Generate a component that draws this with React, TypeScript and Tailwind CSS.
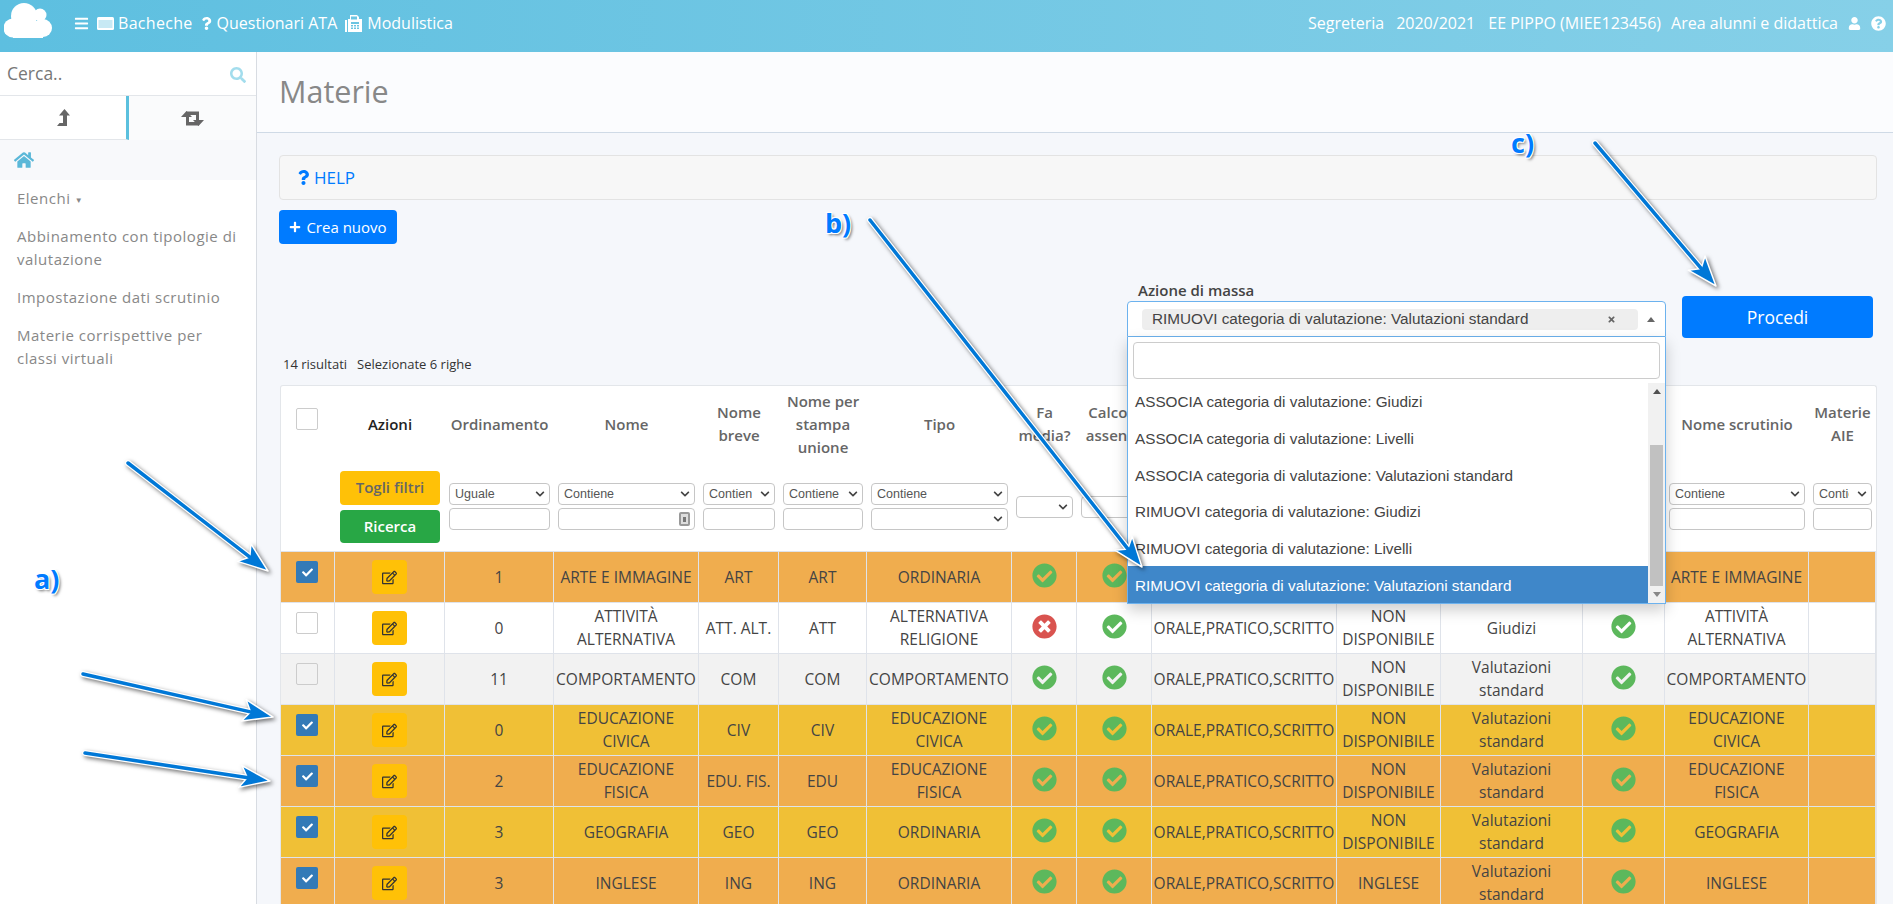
import {
  FaBars,
  FaCheck,
  FaCheckCircle,
  FaChevronDown,
  FaHome,
  FaPlus,
  FaQuestion,
  FaQuestionCircle,
  FaRegEdit,
  FaSearch,
  FaTimes,
  FaTimesCircle,
  FaUser,
} from "react-icons/fa";

type Row = {
  tone: string;
  checked: boolean;
  order: string;
  name: string;
  short: string;
  merge: string;
  type: string;
  media: boolean;
  voto: string;
  categoria: string;
  scrutinio: string;
};

const ORANGE = "bg-[#f0ad4e]";
const YELLOW = "bg-[#f0c036]";

const rows: Row[] = [
  { tone: ORANGE, checked: true, order: "1", name: "ARTE E IMMAGINE", short: "ART", merge: "ART", type: "ORDINARIA", media: true, voto: "NON DISPONIBILE", categoria: "Valutazioni standard", scrutinio: "ARTE E IMMAGINE" },
  { tone: "bg-white", checked: false, order: "0", name: "ATTIVITÀ ALTERNATIVA", short: "ATT. ALT.", merge: "ATT", type: "ALTERNATIVA RELIGIONE", media: false, voto: "NON DISPONIBILE", categoria: "Giudizi", scrutinio: "ATTIVITÀ ALTERNATIVA" },
  { tone: "bg-[#f2f2f2]", checked: false, order: "11", name: "COMPORTAMENTO", short: "COM", merge: "COM", type: "COMPORTAMENTO", media: true, voto: "NON DISPONIBILE", categoria: "Valutazioni standard", scrutinio: "COMPORTAMENTO" },
  { tone: YELLOW, checked: true, order: "0", name: "EDUCAZIONE CIVICA", short: "CIV", merge: "CIV", type: "EDUCAZIONE CIVICA", media: true, voto: "NON DISPONIBILE", categoria: "Valutazioni standard", scrutinio: "EDUCAZIONE CIVICA" },
  { tone: ORANGE, checked: true, order: "2", name: "EDUCAZIONE FISICA", short: "EDU. FIS.", merge: "EDU", type: "EDUCAZIONE FISICA", media: true, voto: "NON DISPONIBILE", categoria: "Valutazioni standard", scrutinio: "EDUCAZIONE FISICA" },
  { tone: YELLOW, checked: true, order: "3", name: "GEOGRAFIA", short: "GEO", merge: "GEO", type: "ORDINARIA", media: true, voto: "NON DISPONIBILE", categoria: "Valutazioni standard", scrutinio: "GEOGRAFIA" },
  { tone: ORANGE, checked: true, order: "3", name: "INGLESE", short: "ING", merge: "ING", type: "ORDINARIA", media: true, voto: "INGLESE", categoria: "Valutazioni standard", scrutinio: "INGLESE" },
];

const options = [
  "ASSOCIA categoria di valutazione: Giudizi",
  "ASSOCIA categoria di valutazione: Livelli",
  "ASSOCIA categoria di valutazione: Valutazioni standard",
  "RIMUOVI categoria di valutazione: Giudizi",
  "RIMUOVI categoria di valutazione: Livelli",
  "RIMUOVI categoria di valutazione: Valutazioni standard",
];

const arrows = [
  { x1: 128, y1: 463, x2: 268, y2: 571 },
  { x1: 83, y1: 674, x2: 273, y2: 717 },
  { x1: 85, y1: 753, x2: 270, y2: 781 },
  { x1: 870, y1: 220, x2: 1142, y2: 567 },
  { x1: 1595, y1: 143, x2: 1716, y2: 286 },
];

function FilterSelect({ label }: { label?: string }) {
  return (
    <div className="flex h-[22px] items-center justify-between overflow-hidden rounded-[4px] border border-[#c6c6c6] bg-white pl-[5px] pr-[4px] text-left font-['Liberation_Sans',sans-serif] text-[12.5px] font-normal text-[#555]">
      <span className="min-w-0 flex-1 overflow-hidden whitespace-nowrap">{label}</span>
      <FaChevronDown className="ml-[8px] shrink-0 text-[10px] text-[#444]" />
    </div>
  );
}

function FilterInput({ icon }: { icon?: boolean }) {
  return (
    <div className="mt-[3px] flex h-[22px] items-center justify-end rounded-[4px] border border-[#c6c6c6] bg-white pr-[4px]">
      {icon && (
        <span className="flex h-[14px] w-[11px] items-center justify-center rounded-[2px] border-2 border-[#999] bg-[#ddd]">
          <span className="h-[5px] w-[3px] bg-[#777]" />
        </span>
      )}
    </div>
  );
}

function Checkbox({ checked }: { checked?: boolean }) {
  if (checked) {
    return (
      <span className="flex size-[22px] items-center justify-center rounded-[2px] bg-[#337ab7] text-white">
        <FaCheck className="text-[11px]" />
      </span>
    );
  }
  return <span className="block size-[22px] rounded-[2px] border border-[#ccc]" />;
}

function Flag({ ok }: { ok: boolean }) {
  return ok ? (
    <FaCheckCircle className="mx-auto -mt-[3px] text-[25px] text-[#5cb85c]" />
  ) : (
    <FaTimesCircle className="mx-auto -mt-[3px] text-[25px] text-[#d9534f]" />
  );
}

function Cloud() {
  return (
    <svg className="-mt-[5px]" width="48" height="35" viewBox="0 0 48 35" fill="white">
      <circle cx="20" cy="13" r="13" />
      <circle cx="36" cy="12" r="6.5" />
      <circle cx="9" cy="25" r="9.5" />
      <circle cx="39" cy="25" r="9" />
      <rect x="9" y="18" width="30" height="17" />
    </svg>
  );
}

function BoardIcon() {
  return (
    <svg width="17" height="13" viewBox="0 0 17 13">
      <rect width="17" height="13" rx="1.5" fill="white" />
      <path fill="#8fd3ea" d="M1.5 3.5h14v1h-14zM1.5 5.5h14v1h-14zM1.5 7.5h14v1h-14zM1.5 9.5h14v1h-14z" />
    </svg>
  );
}

function FormsIcon() {
  return (
    <svg width="17" height="17" viewBox="0 0 17 17">
      <path fill="white" d="M0 5h2v12H0zM3 4h2V0h7l2 2v2h3v13H3z" />
      <rect x="6" y="1.5" width="6" height="3" fill="#6cc5e2" />
      <path fill="#6cc5e2" d="M6 7h8v2H6zM6 10h2v1.5H6zM9 10h2v1.5H9zM12 10h2v1.5h-2zM6 12.5h2V14H6zM9 12.5h2V14H9zM12 12.5h2V14h-2z" />
    </svg>
  );
}

function LevelUpIcon() {
  return (
    <svg width="13" height="17" viewBox="0 0 13 17" fill="#666">
      <path d="M7.5 0L13 6.5H10V17H0L2.5 14H6V6.5H2Z" />
    </svg>
  );
}

function RetweetIcon() {
  return (
    <svg width="23" height="15" viewBox="0 0 23 15" fill="#666">
      <path d="M5.5 0L11 6H8V11H15L18 14.5H5V6H0Z" />
      <path d="M17.5 15L12 9H15V4H8L5 .5H18V9H23Z" />
    </svg>
  );
}

function Arrow({ x1, y1, x2, y2 }: { x1: number; y1: number; x2: number; y2: number }) {
  const len = Math.hypot(x2 - x1, y2 - y1);
  const ux = (x2 - x1) / len;
  const uy = (y2 - y1) / len;
  const nx = -uy;
  const ny = ux;
  const head = [
    [x2, y2],
    [x2 - ux * 30 + nx * 11, y2 - uy * 30 + ny * 11],
    [x2 - ux * 23, y2 - uy * 23],
    [x2 - ux * 30 - nx * 11, y2 - uy * 30 - ny * 11],
  ]
    .map((p) => p.join(","))
    .join(" ");
  const ex = x2 - ux * 22;
  const ey = y2 - uy * 22;
  return (
    <g>
      <line x1={x1} y1={y1} x2={ex} y2={ey} stroke="white" strokeWidth="6" strokeLinecap="round" />
      <polygon points={head} fill="#0078d7" stroke="white" strokeWidth="1.5" strokeLinejoin="round" />
      <line x1={x1} y1={y1} x2={ex} y2={ey} stroke="#0078d7" strokeWidth="3.5" strokeLinecap="round" />
    </g>
  );
}

function Callout({ text, className }: { text: string; className: string }) {
  return (
    <span
      className={`absolute z-50 text-[27px] font-bold leading-none text-[#007bff] [text-shadow:-1px_-1px_0_#fff,1px_-1px_0_#fff,-1px_1px_0_#fff,1px_1px_0_#fff,2px_2px_3px_rgba(0,0,0,0.55)] ${className}`}
    >
      {text}
    </span>
  );
}

function TopBar() {
  return (
    <header className="flex h-[52px] shrink-0 items-center bg-gradient-to-r from-[#5dbfe0] to-[#86d0e8] pb-[6px] pl-[4px] pr-[7px] text-[16px] text-white">
      <Cloud />
      <FaBars className="ml-[22px] text-[15px]" />
      <span className="ml-[8px]">
        <BoardIcon />
      </span>
      <span className="ml-[4px] tracking-[0.3px]">Bacheche</span>
      <FaQuestion className="ml-[7px] text-[13px]" />
      <span className="ml-[4px]">Questionari ATA</span>
      <span className="ml-[8px]">
        <FormsIcon />
      </span>
      <span className="ml-[5px]">Modulistica</span>
      <div className="ml-auto flex items-center">
        <span>Segreteria</span>
        <span className="ml-[12px]">2020/2021</span>
        <span className="ml-[13px]">EE PIPPO (MIEE123456)</span>
        <span className="ml-[10px]">Area alunni e didattica</span>
        <FaUser className="ml-[10px] text-[13px]" />
        <FaQuestionCircle className="ml-[10px] text-[15px]" />
      </div>
    </header>
  );
}

function Sidebar() {
  return (
    <aside className="w-[257px] shrink-0 border-r border-[#d8dce2] bg-white">
      <div className="flex h-[44px] items-center justify-between border-b border-[#e3e6ea] pl-[7px] pr-[10px] text-[17.5px] text-[#777]">
        <span>Cerca..</span>
        <FaSearch className="mt-[2px] text-[16px] text-[#a3dded]" />
      </div>
      <div className="flex h-[44px]">
        <div className="flex w-[129px] items-center justify-center border-b border-r-[3px] border-[#e3e6ea] border-r-[#5bc0de]">
          <LevelUpIcon />
        </div>
        <div className="flex flex-1 items-center justify-center bg-[#fafbfc]">
          <RetweetIcon />
        </div>
      </div>
      <div className="flex h-[40px] items-center bg-[#f8f9fb] pl-[14px] text-[20px] text-[#5bb8d8]">
        <FaHome />
      </div>
      <nav className="px-[17px] pt-[6px] text-[15px] leading-[23px] tracking-[0.5px] text-[#888]">
        <p className="py-[1px]">
          Elenchi <span className="text-[8px] align-middle">▼</span>
        </p>
        <p className="mt-[13px]">Abbinamento con tipologie di valutazione</p>
        <p className="mt-[15px]">Impostazione dati scrutinio</p>
        <p className="mt-[15px]">Materie corrispettive per classi virtuali</p>
      </nav>
    </aside>
  );
}

function BulkAction() {
  return (
    <div className="mt-[36px] flex items-end justify-end gap-4 pr-[4px]">
      <div className="relative mb-px w-[539px]">
        <p className="mb-[1px] pl-[11px] text-[15px] font-semibold leading-[20px] text-[#444]">Azione di massa</p>
        <div className="flex h-[36px] items-center rounded-t-[4px] border border-[#6cb2ee] bg-white pl-[14px] pr-[10px] font-['Liberation_Sans',sans-serif] text-[15.3px] text-[#444]">
          <div className="flex h-[21px] flex-1 items-center justify-between rounded-[4px] bg-[#eee] pl-[10px] pr-[22px]">
            <span>RIMUOVI categoria di valutazione: Valutazioni standard</span>
            <FaTimes className="text-[9px] text-[#666]" />
          </div>
          <span className="ml-[9px] h-0 w-0 border-x-[4px] border-b-[5px] border-x-transparent border-b-[#666]" />
        </div>
        <div className="absolute inset-x-0 top-full z-20 border border-t-0 border-[#6cb2ee] bg-white font-['Liberation_Sans',sans-serif] text-[15.3px] text-[#444] shadow-[0_6px_14px_rgba(0,0,0,0.2)]">
          <div className="px-[5px] pb-[4px] pt-[5px]">
            <div className="h-[37px] rounded-[4px] border border-[#ccc] bg-white" />
          </div>
          <div className="flex">
            <ul className="min-w-0 flex-1">
              {options.map((o, i) => (
                <li
                  key={o}
                  className={`flex h-[36.7px] items-center pl-[7px] pt-[3px] ${
                    i === options.length - 1 ? "bg-[#3f87c9] text-white" : ""
                  }`}
                >
                  {o}
                </li>
              ))}
            </ul>
            <div className="flex w-[17px] flex-col items-center bg-[#f1f1f1]">
              <span className="flex h-[17px] items-center">
                <span className="h-0 w-0 border-x-[4px] border-b-[5px] border-x-transparent border-b-[#505050]" />
              </span>
              <div className="mt-[45px] h-[141px] w-[13px] bg-[#c1c1c1]" />
              <span className="flex h-[17px] items-center">
                <span className="h-0 w-0 border-x-[4px] border-t-[5px] border-x-transparent border-t-[#888]" />
              </span>
            </div>
          </div>
        </div>
      </div>
      <button className="h-[42px] w-[191px] rounded-[4px] bg-[#007bff] text-[17.5px] text-white">Procedi</button>
    </div>
  );
}

function MaterieTable() {
  const th = "align-middle px-[3px] text-center text-[15px] font-semibold leading-[23px]";
  const muted = `${th} text-[#666]`;
  const tf = "align-middle border-b border-[#dfe3ea] px-[4px]";
  const td = "border-b border-r border-[#dfe3ea] px-0 text-center text-[15.5px] leading-[23px] text-[#444]";
  return (
    <div className="ml-px mt-[10px] w-[1597px] rounded-t-[3px] border border-b-0 border-[#e3e6ea] bg-white">
      <table className="w-[1595px] table-fixed border-separate border-spacing-0">
        <colgroup>
          <col className="w-[54px]" />
          <col className="w-[110px]" />
          <col className="w-[109px]" />
          <col className="w-[145px]" />
          <col className="w-[80px]" />
          <col className="w-[88px]" />
          <col className="w-[145px]" />
          <col className="w-[65px]" />
          <col className="w-[75px]" />
          <col className="w-[185px]" />
          <col className="w-[104px]" />
          <col className="w-[142px]" />
          <col className="w-[82px]" />
          <col className="w-[144px]" />
          <col className="w-[67px]" />
        </colgroup>
        <thead>
          <tr className="h-[76px]">
            <th className="pl-[15px] pt-[22px] align-top">
              <Checkbox />
            </th>
            <th className={`${th} text-[#222]`}>Azioni</th>
            <th className={muted}>Ordinamento</th>
            <th className={muted}>Nome</th>
            <th className={muted}>Nome breve</th>
            <th className={muted}>Nome per stampa unione</th>
            <th className={muted}>Tipo</th>
            <th className={muted}>Fa media?</th>
            <th className={muted}>Calcolo assenze</th>
            <th />
            <th />
            <th />
            <th />
            <th className={muted}>Nome scrutinio</th>
            <th className={muted}>Materie AIE</th>
          </tr>
          <tr className="h-[90px]">
            <th className="border-b border-[#dfe3ea]" />
            <th className={tf}>
              <div className="mx-auto flex w-[100px] flex-col gap-[5px] text-[15px] font-semibold">
                <button className="h-[34px] rounded-[4px] bg-[#ffc107] text-[#666]">Togli filtri</button>
                <button className="h-[33px] rounded-[4px] bg-[#28a745] text-white">Ricerca</button>
              </div>
            </th>
            <th className={tf}>
              <FilterSelect label="Uguale" />
              <FilterInput />
            </th>
            <th className={tf}>
              <FilterSelect label="Contiene" />
              <FilterInput icon />
            </th>
            <th className={tf}>
              <FilterSelect label="Contiene" />
              <FilterInput />
            </th>
            <th className={tf}>
              <FilterSelect label="Contiene" />
              <FilterInput />
            </th>
            <th className={tf}>
              <FilterSelect label="Contiene" />
              <div className="mt-[3px]">
                <FilterSelect />
              </div>
            </th>
            <th className={tf}>
              <FilterSelect />
            </th>
            <th className={tf}>
              <FilterSelect />
            </th>
            <th className="border-b border-[#dfe3ea]" />
            <th className="border-b border-[#dfe3ea]" />
            <th className="border-b border-[#dfe3ea]" />
            <th className="border-b border-[#dfe3ea]" />
            <th className={tf}>
              <FilterSelect label="Contiene" />
              <FilterInput />
            </th>
            <th className={tf}>
              <FilterSelect label="Contiene" />
              <FilterInput />
            </th>
          </tr>
        </thead>
        <tbody>
          {rows.map((r) => (
            <tr key={r.name} className={`h-[51px] ${r.tone}`}>
              <td className="border-b border-r border-[#dfe3ea] pl-[15px] pt-[9px] align-top">
                <Checkbox checked={r.checked} />
              </td>
              <td className={td}>
                <button className="mx-auto flex h-[34px] w-[35px] items-center justify-center rounded-[4px] bg-[#ffc107] text-[15px] text-[#333]">
                  <FaRegEdit />
                </button>
              </td>
              <td className={td}>{r.order}</td>
              <td className={td}>{r.name}</td>
              <td className={td}>{r.short}</td>
              <td className={td}>{r.merge}</td>
              <td className={td}>{r.type}</td>
              <td className={td}>
                <Flag ok={r.media} />
              </td>
              <td className={td}>
                <Flag ok />
              </td>
              <td className={td}>ORALE,PRATICO,SCRITTO</td>
              <td className={td}>{r.voto}</td>
              <td className={td}>{r.categoria}</td>
              <td className={td}>
                <Flag ok />
              </td>
              <td className={td}>{r.scrutinio}</td>
              <td className={td} />
            </tr>
          ))}
        </tbody>
      </table>
    </div>
  );
}

export default function App() {
  return (
    <div className="relative flex h-[904px] flex-col overflow-hidden bg-[#f5f7fb] font-['Open_Sans',sans-serif]">
      <TopBar />
      <div className="flex min-h-0 flex-1">
        <Sidebar />
        <main className="min-w-0 flex-1">
          <div className="flex h-[81px] items-center border-b border-[#cfdae6] bg-[#fbfcfe] pl-[22px] text-[30.5px] text-[#888]">
            Materie
          </div>
          <div className="pl-[22px] pr-[16px]">
            <div className="mt-[22px] flex h-[45px] items-center gap-[3px] rounded-[4px] border border-[#e3e3e3] bg-[#f7f7f7] pl-[16px] text-[17px] text-[#007bff]">
              <FaQuestion className="text-[15px]" />
              HELP
            </div>
            <button className="mt-[10px] flex h-[34px] w-[118px] items-center justify-center gap-[5px] rounded-[4px] bg-[#007bff] text-[15px] text-white">
              <FaPlus className="text-[12px]" />
              Crea nuovo
            </button>
            <BulkAction />
            <p className="mt-[17px] flex h-[20px] items-center gap-[10px] pl-[4px] text-[13px] text-[#333]">
              <span>14 risultati</span>
              <span>Selezionate 6 righe</span>
            </p>
            <MaterieTable />
          </div>
        </main>
      </div>

      {/* Annotations drawn on top of the screenshot */}
      <svg
        className="pointer-events-none absolute inset-0 z-40 drop-shadow-[2px_2px_2px_rgba(0,0,0,0.55)]"
        width="1893"
        height="904"
        viewBox="0 0 1893 904"
      >
        {arrows.map((a) => (
          <Arrow key={a.x1} {...a} />
        ))}
      </svg>
      <Callout text="a)" className="left-[34px] top-[565px]" />
      <Callout text="b)" className="left-[825px] top-[209px]" />
      <Callout text="c)" className="left-[1511px] top-[129px]" />
    </div>
  );
}
